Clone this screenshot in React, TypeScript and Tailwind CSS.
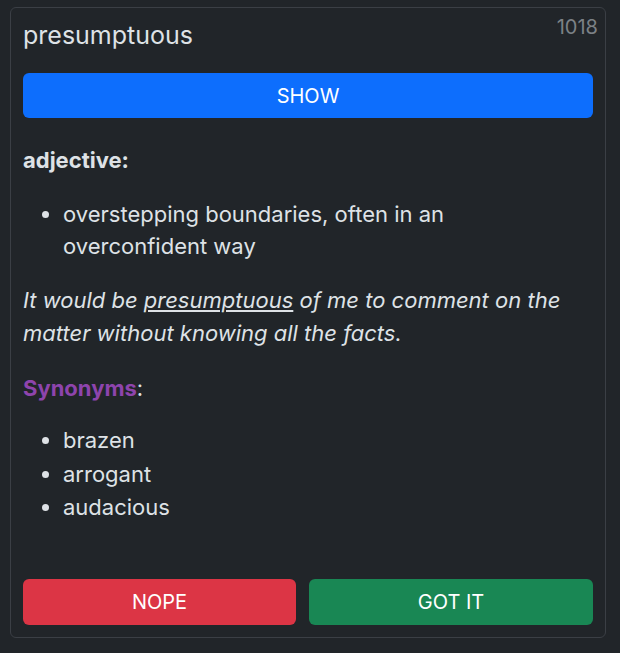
export default function App() {
  return (
    <div className="min-h-[653px] bg-[#212529] pt-[7px] pl-[10px]" style={{ fontFamily: 'Inter, "Noto Sans", sans-serif' }}>
      <div className="relative flex h-[631px] w-[596px] flex-col rounded-[6px] border border-[#3b3f45] bg-[#212529] px-3 pt-3 pb-3 text-[#dee2e6]">
        <div className="absolute right-[7px] top-[7px] text-[20px] leading-[24px] text-[#7c8186]">1018</div>
        <h4 className="text-[25px] font-normal leading-[30px] text-[#dee2e6]">presumptuous</h4>
        <button className="mt-[23px] h-[45px] w-full rounded-[6px] bg-[#0d6efd] text-[20px] uppercase text-white">
          Show
        </button>
        <div className="mt-[26px] text-[22px] font-bold leading-[33px]">adjective:</div>
        <ul className="mt-[21px] list-disc pl-10 text-[22px] leading-[32px]">
          <li>overstepping boundaries, often in an overconfident way</li>
        </ul>
        <p className="mt-[22px] text-[22px] italic leading-[33px]">
          It would be <u>presumptuous</u> of me to comment on the matter without knowing all the facts.
        </p>
        <div className="mt-[22px] text-[22px] leading-[33px]">
          <span className="font-bold text-[#8e44ad]">Synonyms</span>:
        </div>
        <ul className="mt-[19px] list-disc pl-10 text-[22px] leading-[33.5px]">
          <li>brazen</li>
          <li>arrogant</li>
          <li>audacious</li>
        </ul>
        <div className="mt-auto flex gap-[13px]">
          <button className="h-[46px] w-[273px] rounded-[6px] bg-[#dc3545] text-[20px] text-white">NOPE</button>
          <button className="h-[46px] flex-1 rounded-[6px] bg-[#198754] text-[20px] text-white">GOT IT</button>
        </div>
      </div>
    </div>
  );
}
